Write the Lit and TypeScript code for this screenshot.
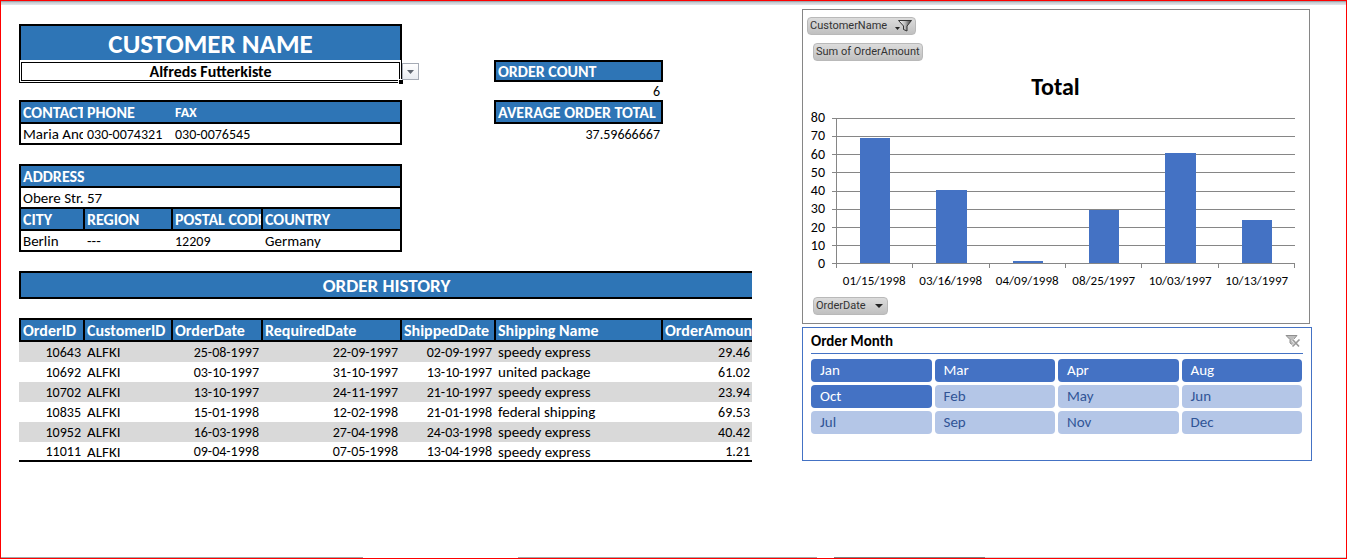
import { LitElement, html, css } from "lit";
import { customElement, property, state } from "lit/decorators.js";
import { classMap } from "lit/directives/class-map.js";
import { styleMap } from "lit/directives/style-map.js";

const orders = [
  ["10643", "ALFKI", "25-08-1997", "22-09-1997", "02-09-1997", "speedy express", "29.46"],
  ["10692", "ALFKI", "03-10-1997", "31-10-1997", "13-10-1997", "united package", "61.02"],
  ["10702", "ALFKI", "13-10-1997", "24-11-1997", "21-10-1997", "speedy express", "23.94"],
  ["10835", "ALFKI", "15-01-1998", "12-02-1998", "21-01-1998", "federal shipping", "69.53"],
  ["10952", "ALFKI", "16-03-1998", "27-04-1998", "24-03-1998", "speedy express", "40.42"],
  ["11011", "ALFKI", "09-04-1998", "07-05-1998", "13-04-1998", "speedy express", "1.21"],
];
const columns = ["OrderID", "CustomerID", "OrderDate", "RequiredDate", "ShippedDate", "Shipping Name", "OrderAmount"];
const textColumns = new Set([1, 5]);

const base = css`
  *, *::before, *::after { box-sizing: border-box; }
  :host { display: block; font-family: Carlito, Lato, sans-serif; font-size: 15px; color: #000; }
`;

@customElement("customer-sheet")
class CustomerSheet extends LitElement {
  static styles = [base, css`
    .top { display: grid; grid-template-columns: 64fr 88fr 90fr 139fr 94fr 167fr 91fr; }
    .details { grid-column: 1 / 5; margin-right: -2px; min-width: 0; }
    .title { margin: 0; height: 36px; border: 2px solid #000; border-bottom: 0; background: #2e75b6; color: #fff; font-size: 27px; line-height: 36px; font-weight: 700; text-align: center; }
    .picker { position: relative; height: 23px; padding: 2px 1px 1px; border: 1px solid #000; border-top: 0; }
    .picker select { display: block; width: 100%; height: 19px; margin: 0; padding: 0; border: 1px solid #000; border-radius: 0; appearance: none; background: #fff; color: #000; font: 700 16px/17px Carlito, Lato, sans-serif; text-align: center; text-align-last: center; outline: 0; }
    .handle { position: absolute; right: -2px; bottom: -2px; width: 5px; height: 5px; background: #000; border: 1px solid #fff; border-width: 1px 0 0 1px; }
    .open { position: absolute; left: calc(100% + 1px); top: 3px; width: 17px; height: 17px; padding: 0; border: 1px solid #a5abb5; background: linear-gradient(#fff, #e9ecf1); display: grid; place-items: center; }
    .open svg { display: block; }
    .grid { display: grid; grid-template-columns: 62fr 88fr 90fr 139fr; border: 2px solid #000; margin: 0; }
    .contact { margin-top: 17px; }
    .address { margin-top: 19px; }
    .cell { padding-left: 2px; height: 19px; line-height: 20px; white-space: nowrap; overflow: hidden; min-width: 0; }
    .head { height: 20px; line-height: 21px; background: #2e75b6; color: #fff; font-weight: 700; font-size: 16px; }
    .wide { grid-column: 1 / -1; }
    .tail { grid-column: 3 / -1; }
    .under { border-bottom: 2px solid #000; height: 22px; }
    .rule { border-bottom: 2px solid #000; height: 21px; }
    .split { border-left: 2px solid #000; }
    .indent { padding-left: 4px; }
    .num { font-size: 14px; line-height: 22px; }
    .stats { grid-column: 6; margin: 0 -2px 0 0; padding-top: 36px; min-width: 0; font-size: 14px; }
    .stats dt { height: 22px; padding-left: 2px; border: 2px solid #000; background: #2e75b6; color: #fff; font-weight: 700; font-size: 16px; line-height: 19px; white-space: nowrap; overflow: hidden; }
    .stats dt.tall { height: 24px; line-height: 21px; }
    .stats dd { margin: 0; padding-right: 3px; height: 18px; line-height: 19px; text-align: right; }
    .stats dd.tall { height: 20px; line-height: 21px; }
    .history { margin: 19px 0; height: 28px; border: 2px solid #000; border-right: 0; background: #2e75b6; color: #fff; font-size: 19px; line-height: 26px; font-weight: 700; text-align: center; }
    .orders { border-collapse: separate; border-spacing: 0; table-layout: fixed; width: 100%; }
    .orders th, .orders td { white-space: nowrap; overflow: hidden; line-height: 19px; }
    .orders th { height: 24px; padding: 1px 0 0 2px; border: 2px solid #000; border-right: 0; background: #2e75b6; color: #fff; font-weight: 700; font-size: 16px; text-align: left; }
    .orders td { height: 20px; padding: 1px 2px 0; font-size: 14px; text-align: right; }
    .orders td.text { text-align: left; padding-left: 4px; font-size: 15px; }
    .orders tr:nth-child(odd) td { background: #d9d9d9; }
    .orders tr:last-child td { padding-top: 2px; border-bottom: 2px solid #000; line-height: 16px; }
  `];

  render() {
    const widths = [64, 88, 90, 139, 94, 167, 91];
    return html`
      <div class="top">
        <section class="details">
          <h1 class="title" id="customer">CUSTOMER NAME</h1>
          <div class="picker">
            <select aria-labelledby="customer"><option>Alfreds Futterkiste</option></select>
            <span class="handle"></span>
            <button class="open" aria-label="Show customers"><svg width="7" height="4"><path d="M0 0H7L3.5 4Z" fill="#5f6670"/></svg></button>
          </div>
          <div class="grid contact">
            <div class="cell head under">CONTACT</div><div class="cell head under indent">PHONE</div><div class="cell head under num tail indent">FAX</div>
            <div class="cell">Maria Anders</div><div class="cell num indent">030-0074321</div><div class="cell num tail indent">030-0076545</div>
          </div>
          <div class="grid address">
            <div class="cell head under wide">ADDRESS</div>
            <div class="cell rule wide">Obere Str. 57</div>
            <div class="cell head under">CITY</div><div class="cell head under split">REGION</div><div class="cell head under split">POSTAL CODE</div><div class="cell head under split">COUNTRY</div>
            <div class="cell">Berlin</div><div class="cell indent">---</div><div class="cell num indent">12209</div><div class="cell indent">Germany</div>
          </div>
        </section>
        <dl class="stats">
          <dt>ORDER COUNT</dt><dd>6</dd>
          <dt class="tall">AVERAGE ORDER TOTAL</dt><dd class="tall">37.59666667</dd>
        </dl>
      </div>
      <h2 class="history" id="history">ORDER HISTORY</h2>
      <table class="orders" aria-labelledby="history">
        <colgroup>${widths.map((w) => html`<col style=${styleMap({ width: `${(w / 733) * 100}%` })}>`)}</colgroup>
        <thead><tr>${columns.map((c) => html`<th scope="col">${c}</th>`)}</tr></thead>
        <tbody>${orders.map((row) => html`<tr>${row.map((v, i) => html`<td class=${classMap({ text: textColumns.has(i) })}>${v}</td>`)}</tr>`)}</tbody>
      </table>`;
  }
}

@customElement("order-chart")
class OrderChart extends LitElement {
  static styles = [base, css`
    .panel { height: 315px; padding: 7px 14px 0 4px; border: 1px solid #868686; margin-right: 2px; }
    .chip { display: flex; align-items: center; width: max-content; height: 18px; padding: 0 2px; border: 1px solid #b9b9b9; border-radius: 4px; background: linear-gradient(#dcdcdc, #c0c0c0); color: #333; font: 11px/16px Roboto, sans-serif; }
    .chip svg { display: block; }
    .filter { gap: 8px; }
    .value, .axis { margin-left: 6px; }
    .value { margin-top: 8px; }
    .axis { gap: 9px; padding-right: 4px; margin-top: 7px; }
    .title { margin: 12px 0 17px; font-size: 24px; line-height: 28px; font-weight: 700; text-align: center; padding-left: 9px; }
    .plot { display: grid; grid-template-columns: 18px minmax(0, 1fr); column-gap: 7px; font-size: 14px; }
    .scale { display: flex; flex-direction: column; justify-content: space-between; margin: -9px 0; text-align: right; line-height: 18px; }
    .area { display: grid; height: 146px; }
    .lines, .bars { grid-area: 1 / 1; }
    .lines { display: flex; flex-direction: column; border-bottom: 1px solid #868686; }
    .line { flex: 1; border-top: 1px solid #868686; }
    .bars { display: flex; margin-left: 4px; padding: 1px 0; border-left: 1px solid #868686; }
    .slot { flex: 1; display: flex; align-items: flex-end; justify-content: center; }
    .bar { width: 40%; background: #4472c4; }
    .dates { grid-column: 2; display: flex; margin-left: 4px; border-left: 1px solid #868686; height: 4px; }
    .dates span { flex: 1; border-right: 1px solid #868686; }
    .labels { grid-column: 2; display: flex; margin-left: 4px; padding-top: 4px; font-size: 13px; line-height: 18px; }
    .labels span { flex: 1; text-align: center; }
  `];

  @property({ attribute: false }) points: [string, number][] = [
    ["01/15/1998", 69.53], ["03/16/1998", 40.42], ["04/09/1998", 1.21],
    ["08/25/1997", 29.46], ["10/03/1997", 61.02], ["10/13/1997", 23.94],
  ];

  render() {
    const ticks = [80, 70, 60, 50, 40, 30, 20, 10, 0];
    return html`
      <section class="panel">
        <button class="chip filter">CustomerName
          <svg width="18" height="14" viewBox="0 0 18 14"><defs><linearGradient id="f"><stop offset="0" stop-color="#fff"/><stop offset=".5" stop-color="#bbb"/><stop offset="1" stop-color="#333"/></linearGradient></defs><path d="M0 8H5L2.5 11Z" fill="#222"/><path d="M3.5 1.5H16.5L12 7V12L8.5 10.500V7Z" fill="url(#f)" stroke="#333"/></svg>
        </button>
        <button class="chip value">Sum of OrderAmount</button>
        <h2 class="title">Total</h2>
        <div class="plot">
          <div class="scale">${ticks.map((t) => html`<span>${t}</span>`)}</div>
          <div class="area">
            <div class="lines">${ticks.slice(1).map(() => html`<div class="line"></div>`)}</div>
            <div class="bars">${this.points.map(([, v]) => html`<div class="slot"><div class="bar" style=${styleMap({ height: `${(v / 80) * 100}%` })}></div></div>`)}</div>
          </div>
          <div class="dates">${this.points.map(() => html`<span></span>`)}</div>
          <div class="labels">${this.points.map(([d]) => html`<span>${d}</span>`)}</div>
        </div>
        <button class="chip axis">OrderDate <svg width="8" height="4"><path d="M0 0H8L4 4Z" fill="#222"/></svg></button>
      </section>`;
  }
}

@customElement("month-slicer")
class MonthSlicer extends LitElement {
  static styles = [base, css`
    .panel { height: 134px; padding: 0 8px; border: 1px solid #4472c4; }
    .bar { display: flex; align-items: center; justify-content: space-between; height: 26px; border-bottom: 1px solid #4472c4; }
    .bar h2 { margin: 0; font-size: 15px; line-height: 20px; font-weight: 700; }
    .clear { padding: 0; border: 0; background: none; }
    .clear svg { display: block; }
    .months { display: grid; grid-template-columns: repeat(4, minmax(0, 1fr)); gap: 3px; padding: 5px 1px 0 0; }
    .month { height: 23px; padding: 0 9px; border: 0; border-radius: 4px; background: #b4c6e7; color: #305496; font: 15px/23px Carlito, Lato, sans-serif; text-align: left; }
    .on { background: #4472c4; color: #fff; }
  `];

  @state() selected = new Set(["Jan", "Mar", "Apr", "Aug", "Oct"]);

  toggle(m: string) {
    const next = new Set(this.selected);
    if (!next.delete(m)) next.add(m);
    this.selected = next;
  }

  render() {
    const months = ["Jan", "Mar", "Apr", "Aug", "Oct", "Feb", "May", "Jun", "Jul", "Sep", "Nov", "Dec"];
    return html`
      <section class="panel">
        <div class="bar"><h2>Order Month</h2>
          <button class="clear" aria-label="Clear filter"><svg width="18" height="14" viewBox="0 0 18 14"><path d="M1 1.5H12L8.5 5.5V11.5L5 9V5.5Z" fill="#bdbdbd" stroke="#8f8f8f"/><path d="M7.5 5.5L14 12.5M14.5 5.5L7.5 12.5" stroke="#fff" stroke-width="3"/><path d="M7.5 5.5L14 12.5M14.5 5.5L7.5 12.5" stroke="#999" stroke-width="1.7"/></svg></button>
        </div>
        <div class="months">${months.map((m) => html`<button class=${classMap({ month: true, on: this.selected.has(m) })} aria-pressed=${this.selected.has(m)} @click=${() => this.toggle(m)}>${m}</button>`)}</div>
      </section>`;
  }
}

@customElement("app-root")
class AppRoot extends LitElement {
  static styles = [base, css`
    .page { display: flex; flex-direction: column; min-height: 100vh; border: 1px solid #f00; background: #fff; }
    .edge { height: 4px; background: linear-gradient(#8e949c, #c9cdd3 40%, #e4e7eb); }
    .content { flex: 1; display: grid; grid-template-columns: minmax(0, 733fr) minmax(0, 510fr); column-gap: 50px; padding: 4px 34px 16px 18px; align-items: start; }
    .sheet { padding-top: 15px; }
    .side { display: grid; gap: 3px; }
    .foot { display: grid; grid-template-columns: 362fr 155fr 299fr 17fr 151fr 361fr; height: 1px; }
    .mid { background: #a6a6a6; }
    .dark { background: #7f7f7f; }
    .pale { background: #d4d4d4; }
  `];

  render() {
    return html`
      <main class="page">
        <div class="edge"></div>
        <div class="content">
          <customer-sheet class="sheet"></customer-sheet>
          <div class="side"><order-chart></order-chart><month-slicer></month-slicer></div>
        </div>
        <div class="foot"><span class="mid"></span><span></span><span class="mid"></span><span></span><span class="dark"></span><span class="pale"></span></div>
      </main>`;
  }
}
